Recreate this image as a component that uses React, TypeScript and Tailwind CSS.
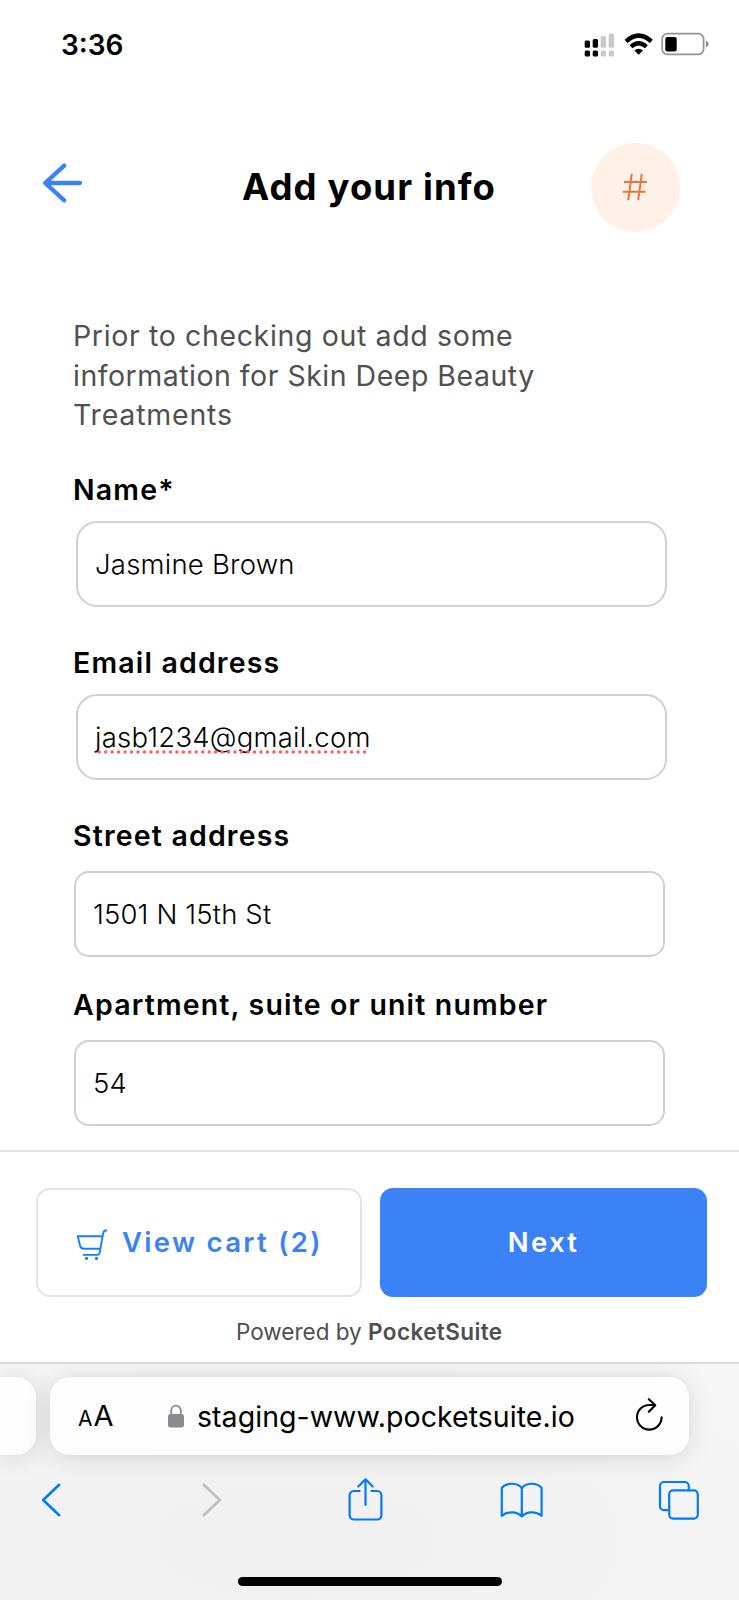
import React from 'react';

interface FieldProps {
  label: string;
  value: string;
  misspelled?: boolean;
}

const StatusBar: React.FC = () => (
  <div className="flex h-[88px] items-center pl-[61px] pr-[30px]">
    <span className="mt-[2px] text-[28px] leading-none font-semibold">3:36</span>
    <svg className="mt-[1px] mr-[1px] ml-auto" width="30" height="24" viewBox="0 0 30 24">
      <g fill="#000">
        <rect x="0.7" y="7.5" width="5.3" height="7.3" rx="1.5" />
        <rect x="8.7" y="6" width="5.3" height="8.8" rx="1.5" />
        <rect x="0.7" y="17.5" width="5.3" height="6" rx="1.5" />
        <rect x="8.7" y="17.5" width="5.3" height="6" rx="1.5" />
      </g>
      <g fill="#c9c9c9">
        <rect x="16.7" y="3" width="5.3" height="11.8" rx="1.5" />
        <rect x="24.7" y="0.5" width="5.3" height="14.3" rx="1.5" />
        <rect x="16.7" y="17.5" width="5.3" height="6" rx="1.5" />
        <rect x="24.7" y="17.5" width="5.3" height="6" rx="1.5" />
      </g>
    </svg>
    <svg className="ml-[9px]" width="30" height="24" viewBox="0 0 30 24">
      <path d="M2 9.4Q14.7 -2.2 27.4 9.4" fill="none" stroke="#000" strokeWidth="4.4" />
      <path d="M7 14.8Q14.7 7.7 22.4 14.8" fill="none" stroke="#000" strokeWidth="4.2" />
      <path d="M10.4 18.6Q14.7 15 19 18.6L14.7 22.7Z" fill="#000" />
    </svg>
    <svg className="ml-[7px]" width="48" height="24" viewBox="0 0 48 24">
      <rect x="1.2" y="1.6" width="41.4" height="20.8" rx="5.5" fill="none" stroke="#949494" strokeWidth="1.7" />
      <rect x="4.3" y="5" width="11.4" height="14.4" rx="2" fill="#000" />
      <path d="M45 8.6Q47.6 9.4 47.6 12T45 15.4Z" fill="#8c8c8c" />
    </svg>
  </div>
);

const Header: React.FC = () => (
  <header className="flex h-[199px] items-center pr-[59px] pl-[41px]">
    <svg
      className="-mt-[9px]"
      width="44"
      height="44"
      viewBox="0 0 44 44"
      fill="none"
      stroke="#3b82f6"
      strokeWidth="4.3"
      strokeLinecap="round"
      strokeLinejoin="round"
    >
      <path d="M23.2 4.6L4.2 22l19 17.4M4.2 22H39" />
    </svg>
    <h1 className="ml-[157px] text-[36.5px] leading-none font-bold tracking-[1.1px] whitespace-nowrap">
      Add your info
    </h1>
    <div className="ml-auto flex size-[89px] items-center justify-center rounded-full bg-[#fff0e8]">
      <svg className="mr-[1px] mb-[2px]" width="26" height="28" viewBox="0 0 26 28" fill="none" stroke="#e8743b" strokeWidth="2">
        <path d="M9.8 0.8L6.2 27.2M19.8 0.8L16.2 27.2M2 9H25M0.8 18.8H23.6" />
      </svg>
    </div>
  </header>
);

// Contact fields sit 2px further in and have rounder corners than the address ones
const ContactField: React.FC<FieldProps> = ({ label, value, misspelled }) => (
  <div className="pt-9">
    <label className="block h-10 text-[28.5px] leading-10 font-semibold tracking-[1.17px]">{label}</label>
    <div className="mt-[11px] ml-[3px] flex h-[86px] w-[591px] items-center rounded-[21px] border-2 border-[#d0d0d0] pl-[17px]">
      <span className="relative text-[27.5px] leading-10 font-light tracking-[0.22px] text-black">
        {value}
        {misspelled && (
          <svg className="absolute top-[33px] left-0" width="276" height="4">
            <line x1="4.2" y1="2" x2="273.5" y2="2" stroke="#ff5f5a" strokeWidth="3.5" strokeLinecap="round" strokeDasharray="0 6.47" />
          </svg>
        )}
      </span>
    </div>
  </div>
);

const AddressField: React.FC<FieldProps> = ({ label, value }) => (
  <div>
    <label className="block h-10 text-[28.5px] leading-10 font-semibold tracking-[1.17px]">{label}</label>
    <div className="mt-[15px] ml-[1px] flex h-[86px] w-[591px] items-center rounded-[15px] border-2 border-[#d0d0d0] pl-[17px]">
      <span className="text-[27.5px] leading-10 font-light tracking-[0.15px] text-black">{value}</span>
    </div>
  </div>
);

const CheckoutFooter: React.FC = () => (
  <footer className="h-[212px] border-t-2 border-[#e4e4e4] pt-[36px]">
    <div className="flex gap-[18px] pl-9">
      <button className="flex h-[109px] w-[326px] items-center rounded-[14px] border-2 border-[#e4e4e4] pl-[38px]">
        <svg className="mt-[3px]" width="32" height="33" viewBox="0 0 32 33" fill="none" stroke="#1a7cfa" strokeWidth="1.9">
          <path d="M31 2.3C28.5 2.3 27.6 3.1 27.2 5.1L23.6 25Q23.2 26.9 21.2 26.9H7" />
          <path d="M26.5 8.3H1.8L4 17.5Q4.8 20.7 8 20.7H24.2" />
          <circle cx="10.5" cy="30.4" r="1.6" fill="#1a7cfa" stroke="none" />
          <circle cx="20.5" cy="30.4" r="1.6" fill="#1a7cfa" stroke="none" />
        </svg>
        <span className="mb-[2px] ml-[14px] text-[27.5px] leading-10 font-semibold tracking-[2.3px] whitespace-nowrap text-[#3b82f6]">
          View cart (2)
        </span>
      </button>
      <button className="flex h-[109px] w-[327px] items-center justify-center rounded-[13px] bg-[#3b82f6] text-[27.5px] font-semibold tracking-[2.3px] text-white">
        Next
      </button>
    </div>
    <p className="mt-5 pl-[236px] text-[22.5px] leading-[30px] whitespace-nowrap text-[#4d4f50]">
      Powered by <span className="font-semibold tracking-[0.4px]">PocketSuite</span>
    </p>
  </footer>
);

const BrowserBar: React.FC = () => (
  <div className="h-[238px] overflow-hidden border-t-2 border-[#dadada] bg-[radial-gradient(ellipse_at_40%_75%,#f0f0f0_0%,#f3f3f3_45%,#f7f7f7_100%)]">
    <div className="flex h-[91px] gap-[14px] pt-[13px]">
      <div className="h-[78px] w-9 rounded-r-[20px] bg-[#fdfdfd] shadow-[0_2px_26px_rgba(0,0,0,0.13)]" />
      <div className="flex h-[78px] w-[639px] items-center rounded-[20px] bg-[#fdfdfd] pl-[28px] shadow-[0_2px_26px_rgba(0,0,0,0.13)]">
        <span className="mt-[2px] w-[90px] text-[29px] leading-10 whitespace-nowrap">
          <span className="mr-[1px] text-[21px]">A</span>A
        </span>
        <svg width="16" height="24" viewBox="0 0 16 24">
          <path d="M3.2 11V6.6a4.8 5 0 0 1 9.6 0V11" fill="none" stroke="#8a8a8f" strokeWidth="1.9" />
          <rect x="0" y="10" width="16" height="13.6" rx="2.4" fill="#8a8a8f" />
        </svg>
        <span className="mt-[2px] ml-[13px] text-[28.5px] leading-10 tracking-[0.05px] whitespace-nowrap">
          staging-www.pocketsuite.io
        </span>
        <svg
          className="-mt-[4px] mr-[23px] ml-auto"
          width="32"
          height="34"
          viewBox="0 0 32 34"
          fill="none"
          stroke="#000"
          strokeWidth="2.1"
          strokeLinecap="round"
          strokeLinejoin="round"
        >
          <path d="M27.6 20.3A12.3 12.3 0 1 1 15.3 8H21M14.8 2.2L21.3 8.3 14.8 14.8" />
        </svg>
      </div>
    </div>
    <nav className="mt-[23px] flex pl-[41px]">
      <svg width="20" height="44" fill="none" stroke="#007aff" strokeWidth="2.6" strokeLinecap="round" strokeLinejoin="round">
        <path d="M18.2 6.8L2.2 22 18.2 37.2" />
      </svg>
      <svg className="ml-[141px]" width="20" height="44" fill="none" stroke="#bfbfbf" strokeWidth="2.6" strokeLinecap="round" strokeLinejoin="round">
        <path d="M1.8 6.8L17.8 22 1.8 37.2" />
      </svg>
      <svg className="ml-[126px]" width="36" height="44" fill="none" stroke="#007aff" strokeWidth="2.2" strokeLinecap="round" strokeLinejoin="round">
        <path d="M11.6 13H5.8A4.2 4.2 0 0 0 1.6 17.2V37.3A4.2 4.2 0 0 0 5.8 41.5H29.2A4.2 4.2 0 0 0 33.4 37.3V17.2A4.2 4.2 0 0 0 29.2 13H23.4" />
        <path d="M17.5 27V1.3M10.3 8.5L17.5 1.3 24.7 8.5" />
      </svg>
      <svg className="ml-[116px]" width="44" height="44" fill="none" stroke="#007aff" strokeWidth="2.2" strokeLinejoin="round">
        <path d="M21.8 10.5C18.8 4.5 6.3 4 1.8 10V37.8C7.8 33 16.8 33.2 21.8 38.5 26.8 33.2 35.8 33 41.6 37.8V10C37.3 4 24.8 4.5 21.8 10.5V38.5" />
      </svg>
      <svg className="ml-[114px]" width="42" height="44" fill="none" stroke="#007aff" strokeWidth="2.2">
        <path d="M10.6 32.2H6A4 4 0 0 1 2 28.2V8A4 4 0 0 1 6 4H26.8A4 4 0 0 1 30.8 8V12.2" />
        <rect x="11.2" y="12.4" width="28.6" height="28.2" rx="4" />
      </svg>
    </nav>
    <div className="mt-[55px] ml-[237.5px] h-[9px] w-[264px] rounded-full bg-black" />
  </div>
);

const App: React.FC = () => {
  return (
    <div className="h-[1600px] w-[739px] overflow-hidden bg-white font-['Inter',sans-serif] text-black">
      <StatusBar />
      <Header />

      <main className="h-[863px] pt-[29px] pl-[73px]">
        <p className="text-[28.5px] leading-[39.5px] whitespace-nowrap text-[#505050]">
          <span className="block tracking-[0.64px]">Prior to checking out add some</span>
          <span className="block tracking-[0.5px]">information for Skin Deep Beauty</span>
          <span className="block tracking-[0.8px]">Treatments</span>
        </p>
        <div className="-mt-[1px]">
          <ContactField label="Name*" value="Jasmine Brown" />
          <ContactField label="Email address" value="jasb1234@gmail.com" misspelled />
        </div>
        <div className="flex flex-col gap-7 pt-9">
          <AddressField label="Street address" value="1501 N 15th St" />
          <AddressField label="Apartment, suite or unit number" value="54" />
        </div>
      </main>

      <CheckoutFooter />
      <BrowserBar />
    </div>
  );
};

export default App;
